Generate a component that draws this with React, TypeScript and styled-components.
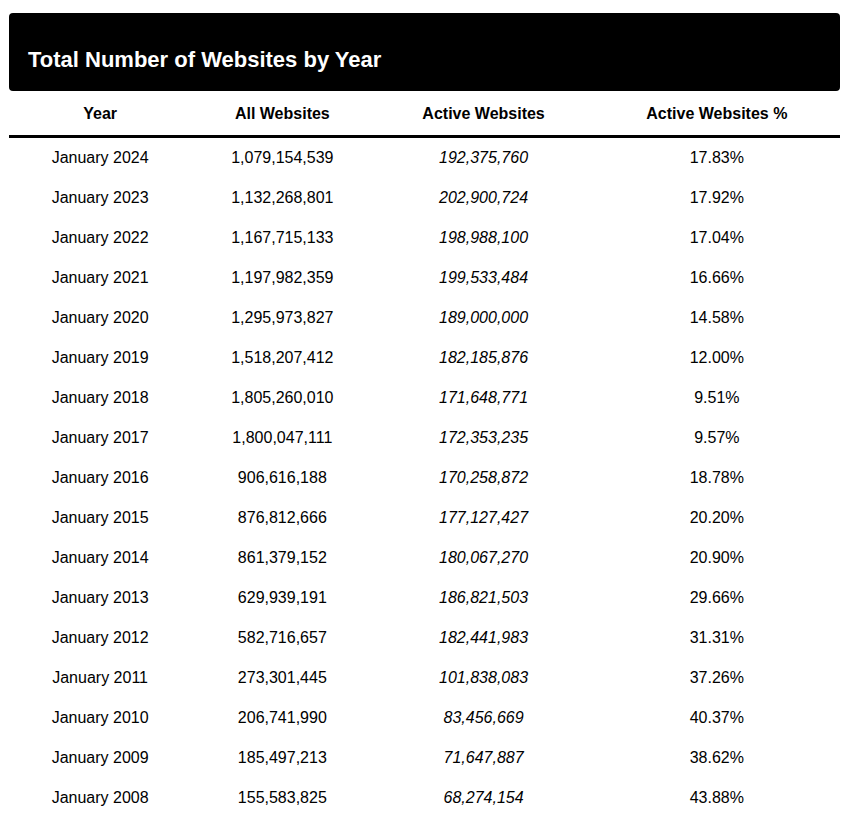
import React from "react";
import styled, { createGlobalStyle } from "styled-components";

const GlobalStyle = createGlobalStyle`
  body {
    margin: 0;
    background: #ffffff;
    font-family: "Liberation Sans", Arial, sans-serif;
    color: #000000;
  }
`;

const Page = styled.div`
  padding: 13px 10px 0 9px;
`;

const TitleBar = styled.div`
  background: #000000;
  border-radius: 4px;
  padding: 33px 19px 17px;
`;

const Title = styled.h2`
  margin: 0;
  color: #ffffff;
  font-size: 22px;
  line-height: 28px;
  font-weight: 700;
`;

const Table = styled.table`
  width: 100%;
  border-collapse: collapse;
  table-layout: fixed;
`;

const HeadCell = styled.th<{ $width: number }>`
  width: ${(p) => p.$width}px;
  height: 42px;
  padding: 2px 0 0;
  font-size: 16px;
  font-weight: 700;
  text-align: center;
  border-bottom: 3px solid #000000;
`;

const Cell = styled.td<{ $italic?: boolean }>`
  height: 40px;
  padding: 0;
  font-size: 16px;
  text-align: center;
  font-style: ${(p) => (p.$italic ? "italic" : "normal")};
`;

interface IRow {
  year: string;
  all: string;
  active: string;
  pct: string;
}

const rows: IRow[] = [
  { year: "January 2024", all: "1,079,154,539", active: "192,375,760", pct: "17.83%" },
  { year: "January 2023", all: "1,132,268,801", active: "202,900,724", pct: "17.92%" },
  { year: "January 2022", all: "1,167,715,133", active: "198,988,100", pct: "17.04%" },
  { year: "January 2021", all: "1,197,982,359", active: "199,533,484", pct: "16.66%" },
  { year: "January 2020", all: "1,295,973,827", active: "189,000,000", pct: "14.58%" },
  { year: "January 2019", all: "1,518,207,412", active: "182,185,876", pct: "12.00%" },
  { year: "January 2018", all: "1,805,260,010", active: "171,648,771", pct: "9.51%" },
  { year: "January 2017", all: "1,800,047,111", active: "172,353,235", pct: "9.57%" },
  { year: "January 2016", all: "906,616,188", active: "170,258,872", pct: "18.78%" },
  { year: "January 2015", all: "876,812,666", active: "177,127,427", pct: "20.20%" },
  { year: "January 2014", all: "861,379,152", active: "180,067,270", pct: "20.90%" },
  { year: "January 2013", all: "629,939,191", active: "186,821,503", pct: "29.66%" },
  { year: "January 2012", all: "582,716,657", active: "182,441,983", pct: "31.31%" },
  { year: "January 2011", all: "273,301,445", active: "101,838,083", pct: "37.26%" },
  { year: "January 2010", all: "206,741,990", active: "83,456,669", pct: "40.37%" },
  { year: "January 2009", all: "185,497,213", active: "71,647,887", pct: "38.62%" },
  { year: "January 2008", all: "155,583,825", active: "68,274,154", pct: "43.88%" },
];

const App = () => {
  return (
    <Page>
      <GlobalStyle />
      <TitleBar>
        <Title>Total Number of Websites by Year</Title>
      </TitleBar>
      <Table>
        <thead>
          <tr>
            <HeadCell $width={182}>Year</HeadCell>
            <HeadCell $width={182}>All Websites</HeadCell>
            <HeadCell $width={220}>Active Websites</HeadCell>
            <HeadCell $width={246}>Active Websites %</HeadCell>
          </tr>
        </thead>
        <tbody>
          {rows.map((r) => (
            <tr key={r.year}>
              <Cell>{r.year}</Cell>
              <Cell>{r.all}</Cell>
              <Cell $italic>{r.active}</Cell>
              <Cell>{r.pct}</Cell>
            </tr>
          ))}
        </tbody>
      </Table>
    </Page>
  );
};

export default App;
